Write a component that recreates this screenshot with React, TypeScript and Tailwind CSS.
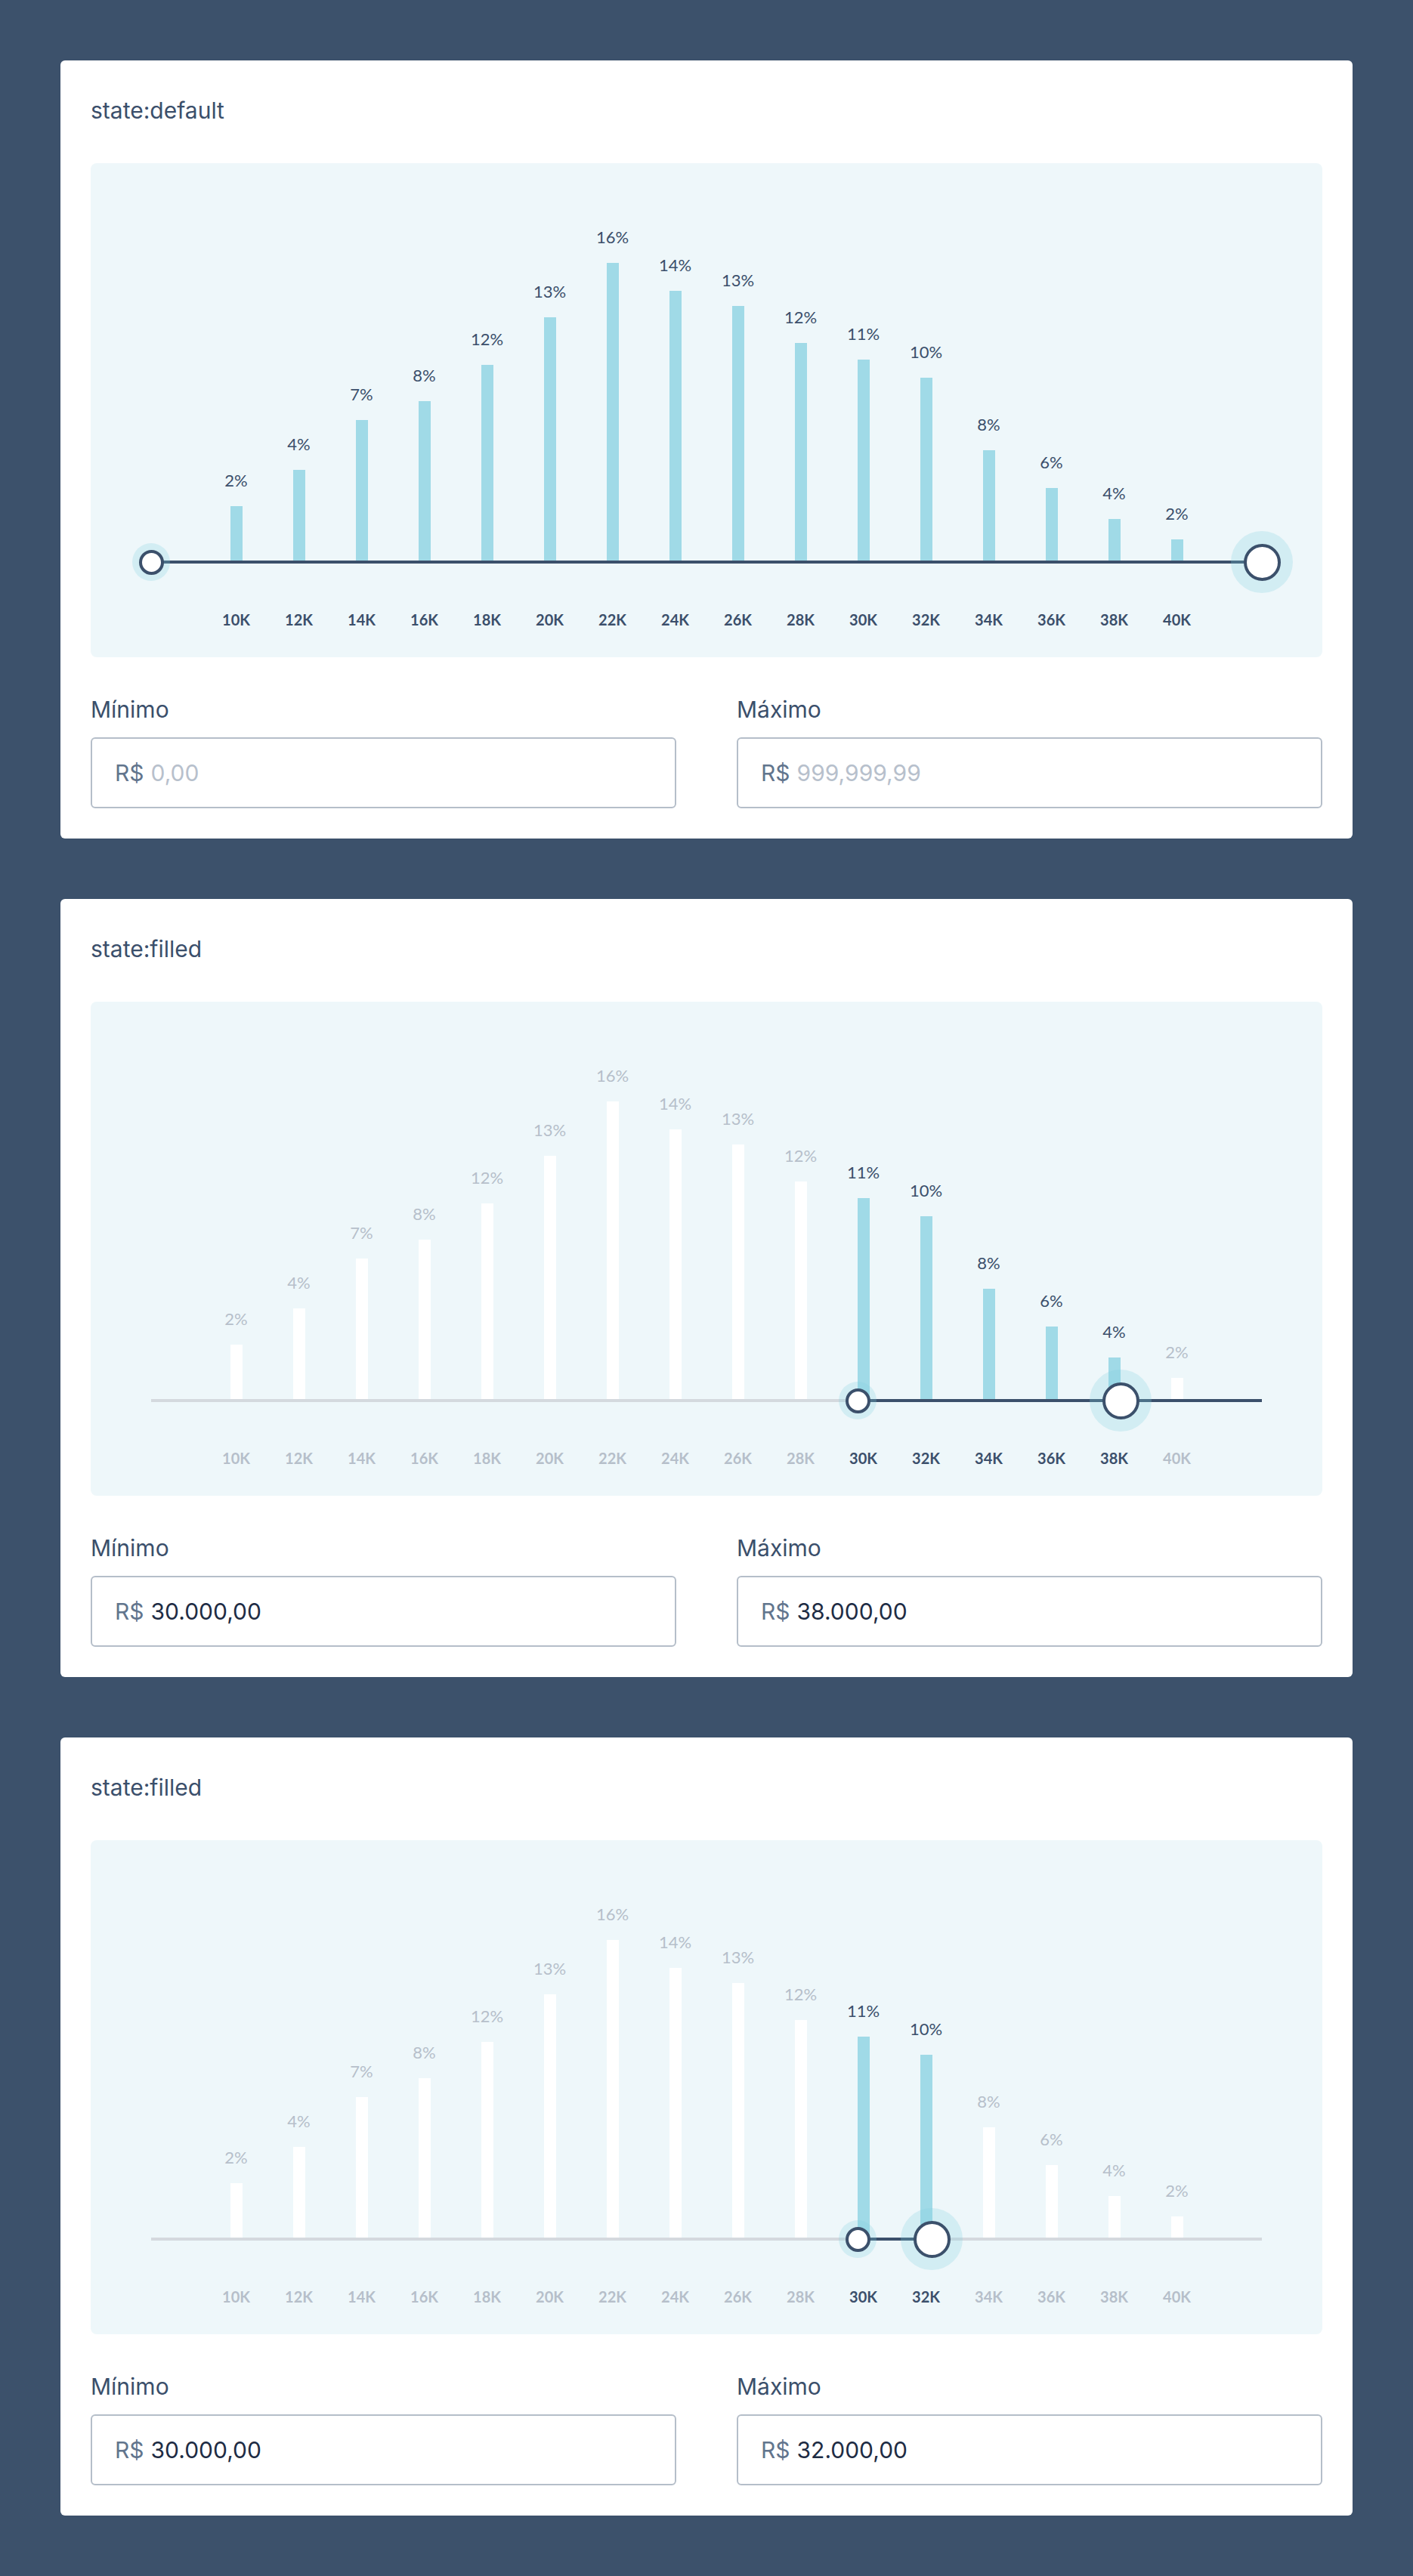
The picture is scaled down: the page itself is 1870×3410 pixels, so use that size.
const bars = [
  { label: "10K", pct: "2%", h: 72 },
  { label: "12K", pct: "4%", h: 120 },
  { label: "14K", pct: "7%", h: 186 },
  { label: "16K", pct: "8%", h: 211 },
  { label: "18K", pct: "12%", h: 259 },
  { label: "20K", pct: "13%", h: 322 },
  { label: "22K", pct: "16%", h: 394 },
  { label: "24K", pct: "14%", h: 357 },
  { label: "26K", pct: "13%", h: 337 },
  { label: "28K", pct: "12%", h: 288 },
  { label: "30K", pct: "11%", h: 266 },
  { label: "32K", pct: "10%", h: 242 },
  { label: "34K", pct: "8%", h: 146 },
  { label: "36K", pct: "6%", h: 96 },
  { label: "38K", pct: "4%", h: 55 },
  { label: "40K", pct: "2%", h: 28 },
];

interface CardState {
  title: string;
  from: number;
  to: number;
  fullTrack: boolean;
  rangeStart: number;
  rangeEnd: number;
  minKnob: number;
  maxKnob: number;
  min: string;
  max: string;
  filled: boolean;
}

const states: CardState[] = [
  {
    title: "state:default",
    from: 0,
    to: 15,
    fullTrack: true,
    rangeStart: 0,
    rangeEnd: 1470,
    minKnob: 0,
    maxKnob: 1470,
    min: "0,00",
    max: "999,999,99",
    filled: false,
  },
  {
    title: "state:filled",
    from: 10,
    to: 14,
    fullTrack: false,
    rangeStart: 935,
    rangeEnd: 1470,
    minKnob: 935,
    maxKnob: 1283,
    min: "30.000,00",
    max: "38.000,00",
    filled: true,
  },
  {
    title: "state:filled",
    from: 10,
    to: 11,
    fullTrack: false,
    rangeStart: 935,
    rangeEnd: 1033,
    minKnob: 935,
    maxKnob: 1033,
    min: "30.000,00",
    max: "32.000,00",
    filled: true,
  },
];

function Knob({ left, big }: { left: number; big?: boolean }) {
  return (
    <div
      className={`absolute top-1/2 -translate-x-1/2 -translate-y-1/2 flex items-center justify-center rounded-full bg-[#7fd0e0]/25 ${
        big ? "w-[82px] h-[82px]" : "w-[50px] h-[50px]"
      }`}
      style={{ left }}
    >
      <div
        className={`rounded-full bg-white border-[4px] border-[#3b506b] ${
          big ? "w-[49px] h-[49px]" : "w-[33px] h-[33px]"
        }`}
      />
    </div>
  );
}

function Field({ label, value, filled }: { label: string; value: string; filled: boolean }) {
  return (
    <div className="flex flex-col">
      <span className="text-[30px] leading-none text-[#3b4f6b]">{label}</span>
      <div className="mt-[22px] flex h-[94px] items-center rounded-[6px] border-2 border-[#b5bec9] bg-white px-[30px] text-[30px]">
        <span className="text-[#62758d]">R$</span>
        <span className={`ml-[9px] ${filled ? "text-[#1e2c44]" : "text-[#b7c0cc]"}`}>{value}</span>
      </div>
    </div>
  );
}

function Card({ s }: { s: CardState }) {
  return (
    <div className="rounded-[6px] bg-white p-10 font-['Inter',sans-serif]">
      <h2 className="pt-[11px] pb-[55px] text-[30px] leading-none text-[#3b4f6b]">{s.title}</h2>

      <div className="flex h-[654px] flex-col rounded-[8px] bg-[#eef7fa] px-[80px] font-['Lato',sans-serif]">
        <div className="flex h-[526px] items-end justify-center">
          {bars.map((b, i) => {
            const on = i >= s.from && i <= s.to;
            return (
              <div key={b.label} className="flex w-[83px] flex-col items-center">
                <span
                  className={`mb-[23px] text-[22px] leading-none ${on ? "text-[#3b4f6b]" : "text-[#b6bfca]"}`}
                >
                  {b.pct}
                </span>
                <div
                  className={`w-4 ${on ? "bg-[#a0dae7]" : "bg-white"}`}
                  style={{ height: b.h }}
                />
              </div>
            );
          })}
        </div>

        <div className={`relative h-[4px] ${s.fullTrack ? "bg-[#3b506b]" : "bg-[#d4d9de]"}`}>
          <div
            className="absolute inset-y-0 bg-[#3b506b]"
            style={{ left: s.rangeStart, width: s.rangeEnd - s.rangeStart }}
          />
          <Knob left={s.minKnob} />
          <Knob left={s.maxKnob} big />
        </div>

        <div className="mt-[64px] flex justify-center">
          {bars.map((b, i) => {
            const on = i >= s.from && i <= s.to;
            return (
              <span
                key={b.label}
                className={`w-[83px] text-center text-[20px] font-bold leading-none ${
                  on ? "text-[#3b4f6b]" : "text-[#b6bfca]"
                }`}
              >
                {b.label}
              </span>
            );
          })}
        </div>
      </div>

      <div className="mt-[54px] grid grid-cols-2 gap-[80px]">
        <Field label="Mínimo" value={s.min} filled={s.filled} />
        <Field label="Máximo" value={s.max} filled={s.filled} />
      </div>
    </div>
  );
}

export default function App() {
  return (
    <div className="min-h-screen bg-[#3c516b] p-[80px]">
      <div className="flex flex-col gap-[80px]">
        {states.map((s, i) => (
          <Card key={i} s={s} />
        ))}
      </div>
    </div>
  );
}
